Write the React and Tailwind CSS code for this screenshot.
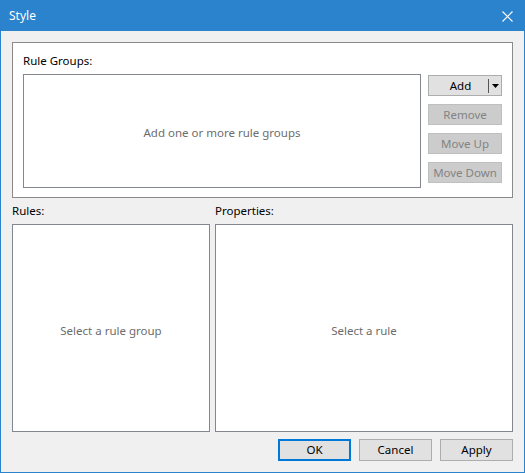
function Btn({ children, disabled }) {
    const base = 'flex h-[21px] w-[74px] items-center justify-center leading-none';
    if (disabled) {
        return <div className={`${base} border border-[#bfbfbf] bg-[#cccccc] text-[#838383]`}>{children}</div>;
    }
    return <div className={`${base} border border-[#adadad] bg-[#e1e1e1] text-black`}>{children}</div>;
}

function ListBox({ className, children }) {
    return (
        <div className={`flex items-center justify-center border border-[#828790] bg-white text-[#6d6d6d] ${className}`}>
            {children}
        </div>
    );
}

export default function App() {
    return (
        <div
            className="flex h-[473px] w-[525px] flex-col text-[11.5px] text-black"
            style={{ fontFamily: '"Noto Sans", "Open Sans", sans-serif' }}
        >
            <div className="flex h-[31px] shrink-0 items-center justify-between bg-[#2b82cd] pl-[9px] pr-[12px] text-white">
                <span className="text-[12px]">Style</span>
                <svg width="11" height="11" viewBox="0 0 11 11" className="mt-[1px]">
                    <path d="M0.5 0.5l10 10M10.5 0.5l-10 10" stroke="#fff" strokeWidth="1.1" />
                </svg>
            </div>

            <div className="flex flex-1 flex-col border-x border-b border-[#2b82cd] bg-[#f0f0f0] px-[11px] pt-[11px]">
                <div className="flex h-[156px] flex-col border border-[#8a8a8a] bg-white px-[10px] pt-[10px]">
                    <div className="mb-[5px] h-[16px] leading-[16px]">Rule Groups:</div>
                    <div className="flex gap-[7px]">
                        <ListBox className="h-[114px] flex-1 pt-[3px]">Add one or more rule groups</ListBox>
                        <div className="flex w-[74px] flex-col gap-[8px] pt-[1px]">
                            <div className="flex h-[21px] w-[74px] items-center border border-[#adadad] bg-[#e1e1e1]">
                                <span className="flex-1 pl-[4px] text-center">Add</span>
                                <span className="h-[14px] w-px bg-[#555]" />
                                <span className="flex w-[12px] justify-center">
                                    <svg width="7" height="4" viewBox="0 0 7 4">
                                        <path d="M0 0h7L3.5 4z" fill="#000" />
                                    </svg>
                                </span>
                            </div>
                            <Btn disabled>Remove</Btn>
                            <Btn disabled>Move Up</Btn>
                            <Btn disabled>Move Down</Btn>
                        </div>
                    </div>
                </div>

                <div className="mt-[5px] flex gap-[5px]">
                    <div className="flex w-[198px] flex-col">
                        <div className="mb-[5px] h-[16px] leading-[16px]">Rules:</div>
                        <ListBox className="h-[208px] pt-[6px]">Select a rule group</ListBox>
                    </div>
                    <div className="flex flex-1 flex-col">
                        <div className="mb-[5px] h-[16px] leading-[16px]">Properties:</div>
                        <ListBox className="h-[208px] pt-[6px]">Select a rule</ListBox>
                    </div>
                </div>

                <div className="mt-[7px] flex justify-end gap-[8px]">
                    <div className="flex h-[22px] w-[73px] items-center justify-center border-2 border-[#0078d7] bg-[#e1e1e1]">OK</div>
                    <div className="flex h-[22px] w-[73px] items-center justify-center border border-[#adadad] bg-[#e1e1e1]">Cancel</div>
                    <div className="flex h-[22px] w-[73px] items-center justify-center border border-[#adadad] bg-[#e1e1e1]">Apply</div>
                </div>
            </div>
        </div>
    );
}
